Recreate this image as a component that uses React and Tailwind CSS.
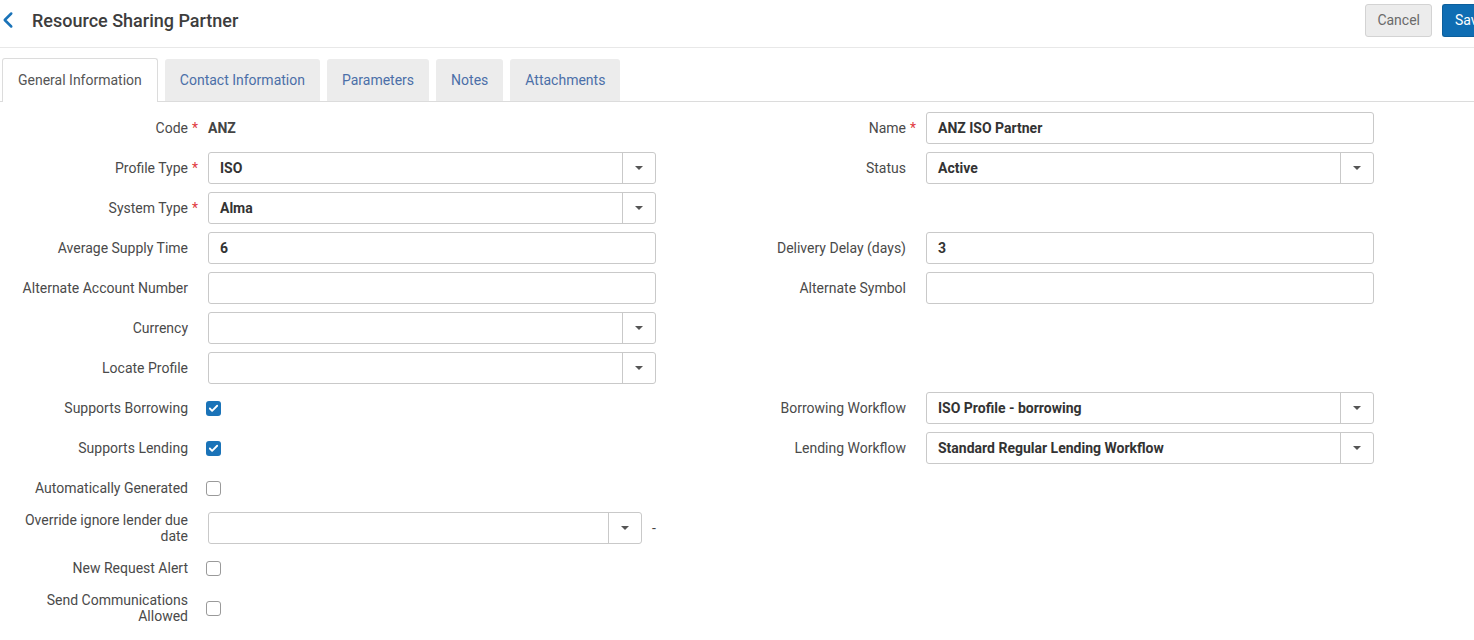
import { ChevronLeft, Check } from 'lucide-react'

const font = { fontFamily: 'Roboto, "Noto Sans", sans-serif' }

function Label({ children, required, lines }) {
  return (
    <div className="w-[188px] shrink-0 relative text-right text-[14px] leading-4 text-[#4a4a4a]">
      {lines ? lines.map((l) => <div key={l}>{l}</div>) : children}
      {required && <span className="absolute left-[192px] top-0 text-[#e0393e]">*</span>}
    </div>
  )
}

function TextInput({ value }) {
  return (
    <div className="w-[448px] h-[32px] border border-[#c9c9c9] rounded-[3px] bg-white pl-[11px] flex items-center text-[14px] font-bold text-[#333]">
      {value}
    </div>
  )
}

function Select({ value, width = 'w-[448px]' }) {
  return (
    <div className={`${width} h-[32px] border border-[#c9c9c9] rounded-[3px] bg-white flex items-stretch`}>
      <div className="flex-1 pl-[11px] flex items-center text-[14px] font-bold text-[#333]">{value}</div>
      <div className="w-[33px] border-l border-[#c9c9c9] flex items-center justify-center">
        <span className="block w-0 h-0 border-l-[4px] border-r-[4px] border-t-[4px] border-l-transparent border-r-transparent border-t-[#555]"></span>
      </div>
    </div>
  )
}

function Checkbox({ checked }) {
  return checked ? (
    <div className="ml-[-2px] w-[15px] h-[15px] rounded-[3px] bg-[#1a73b8] flex items-center justify-center">
      <Check size={11} strokeWidth={4} color="white" />
    </div>
  ) : (
    <div className="ml-[-2px] w-[15px] h-[15px] rounded-[3px] border border-[#9a9a9a] bg-white"></div>
  )
}

function Field({ label, required, lines, children }) {
  return (
    <div className="flex items-center gap-5">
      <Label required={required} lines={lines}>{label}</Label>
      {children}
    </div>
  )
}

function Row({ left, right }) {
  return (
    <div className="h-10 flex items-center">
      <div className="w-[718px] shrink-0">{left}</div>
      <div>{right}</div>
    </div>
  )
}

const tabs = ['General Information', 'Contact Information', 'Parameters', 'Notes', 'Attachments']

export default function App() {
  return (
    <div className="w-[1474px] h-[640px] overflow-hidden bg-white" style={font}>
      <div className="h-12 border-b border-[#e8e8e8] flex items-center pb-[7px]">
        <ChevronLeft size={26} strokeWidth={2.3} color="#1a73b8" className="ml-[-5px] mr-[11px]" />
        <h1 className="text-[18px] font-medium text-[#3d3d3d] flex-1">Resource Sharing Partner</h1>
        <button className="h-[33px] px-[11px] mr-[10px] rounded-[3px] bg-[#ececec] border border-[#d3d3d3] text-[14px] text-[#6a6a6a]">Cancel</button>
        <button className="h-[33px] w-[32px] shrink-0 pl-[12px] text-left whitespace-nowrap overflow-hidden rounded-l-[3px] bg-[#0f6db3] border border-r-0 border-[#0c5f9c] text-[14px] text-white">Save</button>
      </div>

      <div className="mt-[11px] h-[43px] border-b border-[#dcdcdc] flex items-end gap-[7px] pl-[2px]">
        {tabs.map((t, i) =>
          i === 0 ? (
            <div key={t} className="h-[44px] mb-[-1px] px-[15px] flex items-center bg-white border border-b-0 border-[#dcdcdc] rounded-t-[3px] text-[14px] text-[#555]">
              {t}
            </div>
          ) : (
            <div key={t} className="h-[42px] px-[15px] flex items-center bg-[#ececec] rounded-t-[3px] text-[14px] text-[#4b6fa8]">
              {t}
            </div>
          )
        )}
      </div>

      <div className="pt-[6px]">
        <Row
          left={<Field label="Code" required><span className="text-[14px] font-bold text-[#444]">ANZ</span></Field>}
          right={<Field label="Name" required><TextInput value="ANZ ISO Partner" /></Field>}
        />
        <Row
          left={<Field label="Profile Type" required><Select value="ISO" /></Field>}
          right={<Field label="Status"><Select value="Active" /></Field>}
        />
        <Row left={<Field label="System Type" required><Select value="Alma" /></Field>} />
        <Row
          left={<Field label="Average Supply Time"><TextInput value="6" /></Field>}
          right={<Field label="Delivery Delay (days)"><TextInput value="3" /></Field>}
        />
        <Row
          left={<Field label="Alternate Account Number"><TextInput value="" /></Field>}
          right={<Field label="Alternate Symbol"><TextInput value="" /></Field>}
        />
        <Row left={<Field label="Currency"><Select value="" /></Field>} />
        <Row left={<Field label="Locate Profile"><Select value="" /></Field>} />
        <Row
          left={<Field label="Supports Borrowing"><Checkbox checked /></Field>}
          right={<Field label="Borrowing Workflow"><Select value="ISO Profile - borrowing" /></Field>}
        />
        <Row
          left={<Field label="Supports Lending"><Checkbox checked /></Field>}
          right={<Field label="Lending Workflow"><Select value="Standard Regular Lending Workflow" /></Field>}
        />
        <Row left={<Field label="Automatically Generated"><Checkbox /></Field>} />
        <Row
          left={
            <Field lines={['Override ignore lender due', 'date']}>
              <div className="flex items-center gap-[10px]">
                <Select value="" width="w-[434px]" />
                <span className="text-[14px] text-[#444]">-</span>
              </div>
            </Field>
          }
        />
        <Row left={<Field label="New Request Alert"><Checkbox /></Field>} />
        <Row left={<Field lines={['Send Communications', 'Allowed']}><Checkbox /></Field>} />
      </div>
    </div>
  )
}
